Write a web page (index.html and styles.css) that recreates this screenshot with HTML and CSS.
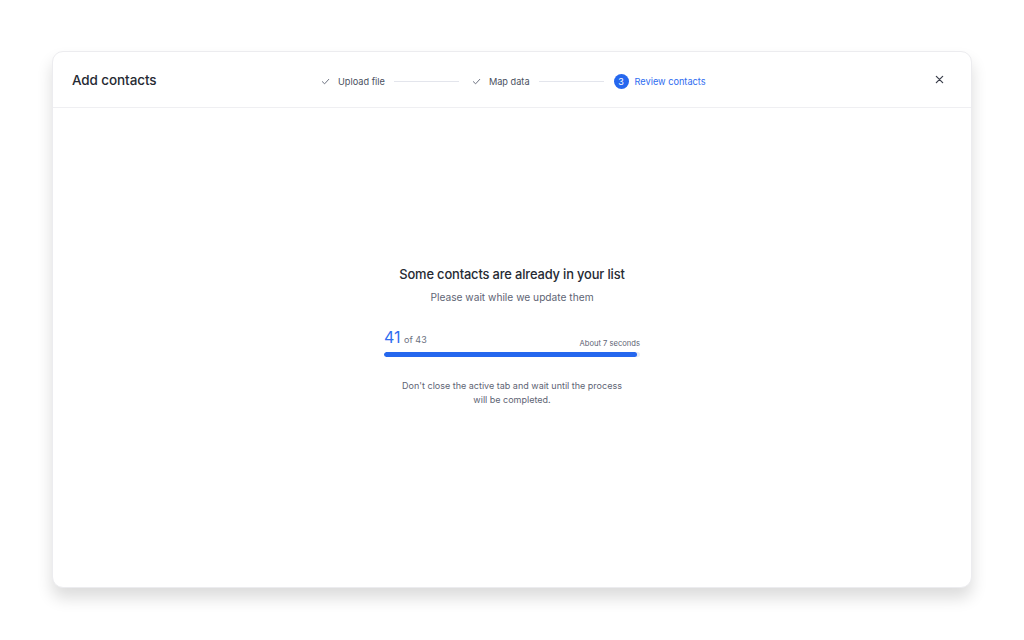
FILE: index.html
```html
<!DOCTYPE html>
<html lang="en">
<head>
    <meta charset="UTF-8">
    <meta name="viewport" content="width=device-width, initial-scale=1.0">
    <title>Add contacts</title>
    <link rel="stylesheet" href="styles.css">
</head>
<body>
    <div class="modal">
        <!-- Header -->
        <div class="modal-header">
            <h2 class="modal-title">Add contacts</h2>

            <div class="steps">
                <div class="step done">
                    <svg class="check" viewBox="0 0 10 10" width="9" height="9">
                        <path d="M1.5 5.2 L4 7.6 L8.6 2.6" fill="none" stroke="currentColor" stroke-width="1.1" stroke-linecap="round" stroke-linejoin="round"/>
                    </svg>
                    <span>Upload file</span>
                </div>
                <div class="step-line"></div>
                <div class="step done">
                    <svg class="check" viewBox="0 0 10 10" width="9" height="9">
                        <path d="M1.5 5.2 L4 7.6 L8.6 2.6" fill="none" stroke="currentColor" stroke-width="1.1" stroke-linecap="round" stroke-linejoin="round"/>
                    </svg>
                    <span>Map data</span>
                </div>
                <div class="step-line"></div>
                <div class="step active">
                    <span class="step-num">3</span>
                    <span>Review contacts</span>
                </div>
            </div>

            <button class="close-btn" type="button" aria-label="Close">
                <svg viewBox="0 0 10 10" width="9" height="9">
                    <path d="M1.5 1.5 L8.5 8.5 M8.5 1.5 L1.5 8.5" stroke="currentColor" stroke-width="1.4" stroke-linecap="round"/>
                </svg>
            </button>
        </div>

        <!-- Body -->
        <div class="modal-body">
            <div class="progress-box">
                <h3 class="progress-title">Some contacts are already in your list</h3>
                <p class="progress-sub">Please wait while we update them</p>

                <div class="progress-info">
                    <div class="count"><span class="count-num">41</span> of 43</div>
                    <div class="eta">About 7 seconds</div>
                </div>
                <div class="track">
                    <div class="bar" style="width: 98.8%"></div>
                </div>

                <p class="note">Don't close the active tab and wait until the process will be completed.</p>
            </div>
        </div>
    </div>
</body>
</html>
```

FILE: styles.css
```css
body {
    margin: 0;
    padding: 51px 52px 52px;
    background-color: #fff;
    font-family: Inter, "Noto Sans", sans-serif;
    color: #1f2430;
}

.modal {
    height: 537px;
    background-color: #fff;
    border-radius: 11px;
    border: 1px solid #ececef;
    box-sizing: border-box;
    box-shadow: 0 10px 16px rgba(0, 0, 0, 0.14);
    display: flex;
    flex-direction: column;
}

.modal-header {
    height: 55px;
    flex-shrink: 0;
    display: flex;
    align-items: center;
    padding: 0 27px 0 19px;
    border-bottom: 1px solid #efeff2;
    position: relative;
}

.modal-title {
    margin: 0;
    font-size: 13.5px;
    font-weight: 500;
    letter-spacing: -0.1px;
    color: #262a33;
}

.steps {
    position: absolute;
    left: 268px;
    top: 22px;
    display: flex;
    align-items: center;
    font-size: 9.2px;
    color: #4a5060;
}

.step {
    display: flex;
    align-items: center;
    gap: 8px;
}

.step .check {
    color: #6b7080;
}

.step-line {
    width: 65px;
    height: 1px;
    background-color: #e3e5ec;
    margin: 0 10px 0 9px;
}

.step:nth-child(3) {
    margin-left: 3px;
}

.step.active {
    color: #2f6df0;
    gap: 6px;
    margin-left: 0;
}

.step-num {
    width: 15px;
    height: 15px;
    border-radius: 50%;
    background-color: #2567ee;
    color: #fff;
    font-size: 9px;
    display: flex;
    align-items: center;
    justify-content: center;
}

.close-btn {
    margin-left: auto;
    background: none;
    border: none;
    padding: 0;
    color: #3b3f4c;
    cursor: pointer;
    display: flex;
    margin-top: -1px;
}

.modal-body {
    flex: 1;
    display: flex;
    align-items: center;
    justify-content: center;
    padding-bottom: 22px;
}

.progress-box {
    width: 256px;
    text-align: center;
}

.progress-title {
    margin: 0;
    font-size: 12.9px;
    font-weight: 500;
    color: #262a33;
    white-space: nowrap;
    letter-spacing: -0.15px;
}

.progress-sub {
    margin: 9px 0 0;
    font-size: 10.2px;
    color: #5e6474;
}

.progress-info {
    display: flex;
    justify-content: space-between;
    align-items: flex-end;
    margin-top: 24px;
}

.count {
    font-size: 9px;
    color: #6b7080;
}

.count-num {
    font-size: 16px;
    color: #2f6df0;
    margin-right: 1px;
}

.eta {
    font-size: 7.6px;
    color: #5e6474;
    margin-bottom: -1px;
}

.track {
    margin-top: 5px;
    height: 5px;
    border-radius: 3px;
    background-color: #e8ecf5;
    overflow: hidden;
}

.bar {
    height: 100%;
    background-color: #2567ee;
    border-radius: 3px;
}

.note {
    margin: 22px auto 0;
    font-size: 9px;
    line-height: 14px;
    color: #5e6474;
    width: 228px;
}
```
